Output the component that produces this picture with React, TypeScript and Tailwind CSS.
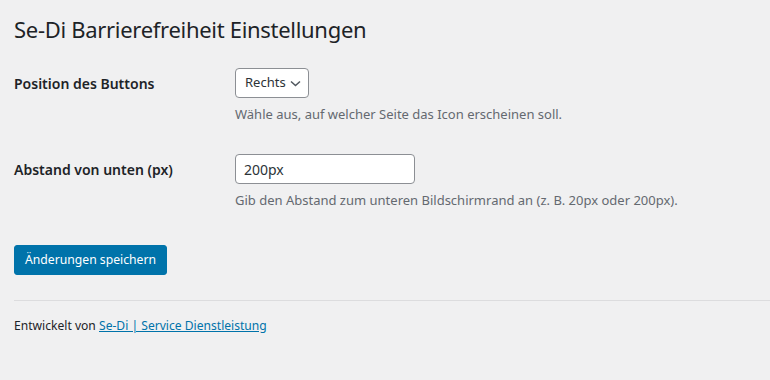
import { useState } from 'react';

export default function App() {
  const [position, setPosition] = useState('right');
  const [offset, setOffset] = useState('200px');

  return (
    <div className="min-h-[380px] w-full bg-[#f0f0f1] text-[#1d2327] font-['Noto_Sans',sans-serif] text-[13px]">
      <div className="pl-[14px] pt-[14px]">
        <h1 className="text-[22px] leading-[30px] font-normal tracking-[-0.3px]">
          Se-Di Barrierefreiheit Einstellungen
        </h1>

        {/* Form table */}
        <div className="mt-[24px] flex flex-col">
          <FormRow label="Position des Buttons" description="Wähle aus, auf welcher Seite das Icon erscheinen soll.">
            <div className="relative w-[74px] h-[30px]">
              <select
                value={position}
                onChange={(e) => setPosition(e.target.value)}
                className="appearance-none w-full h-full rounded-[4px] border border-[#8c8f94] bg-white pl-[9px] pr-[20px] text-[13px] text-[#2c3338] outline-none"
              >
                <option value="right">Rechts</option>
                <option value="left">Links</option>
              </select>
              <svg
                className="pointer-events-none absolute right-[8px] top-[12px]"
                width="11"
                height="7"
                viewBox="0 0 11 7"
                fill="none"
              >
                <path d="M1 1.5l4.5 4 4.5-4" stroke="#50575e" strokeWidth="1.5" />
              </svg>
            </div>
          </FormRow>

          <div className="h-[30px]" />

          <FormRow
            label="Abstand von unten (px)"
            description="Gib den Abstand zum unteren Bildschirmrand an (z. B. 20px oder 200px)."
          >
            <input
              value={offset}
              onChange={(e) => setOffset(e.target.value)}
              className="w-[180px] h-[30px] rounded-[4px] border border-[#8c8f94] bg-white px-[8px] text-[14px] text-[#2c3338] outline-none"
            />
          </FormRow>
        </div>

        <button className="mt-[35px] h-[30px] px-[10px] rounded-[3px] bg-[#0073aa] border border-[#0073aa] text-white text-[12.2px]">
          Änderungen speichern
        </button>
      </div>

      <div className="ml-[14px] mt-[25px] border-t border-[#dcdcde]" />

      <p className="pl-[14px] mt-[15px] text-[12.1px] leading-[20px]">
        Entwickelt von{' '}
        <a href="#" className="text-[#0073aa] underline">
          Se-Di | Service Dienstleistung
        </a>
      </p>
    </div>
  );
}

function FormRow({
  label,
  description,
  children,
}: {
  label: string;
  description: string;
  children: React.ReactNode;
}) {
  return (
    <div className="flex">
      <div className="w-[221px] flex-shrink-0 h-[30px] flex items-center text-[14px] font-semibold">
        {label}
      </div>
      <div className="flex flex-col">
        {children}
        <p className="mt-[6px] leading-[20px] text-[13px] text-[#646970]">{description}</p>
      </div>
    </div>
  );
}
